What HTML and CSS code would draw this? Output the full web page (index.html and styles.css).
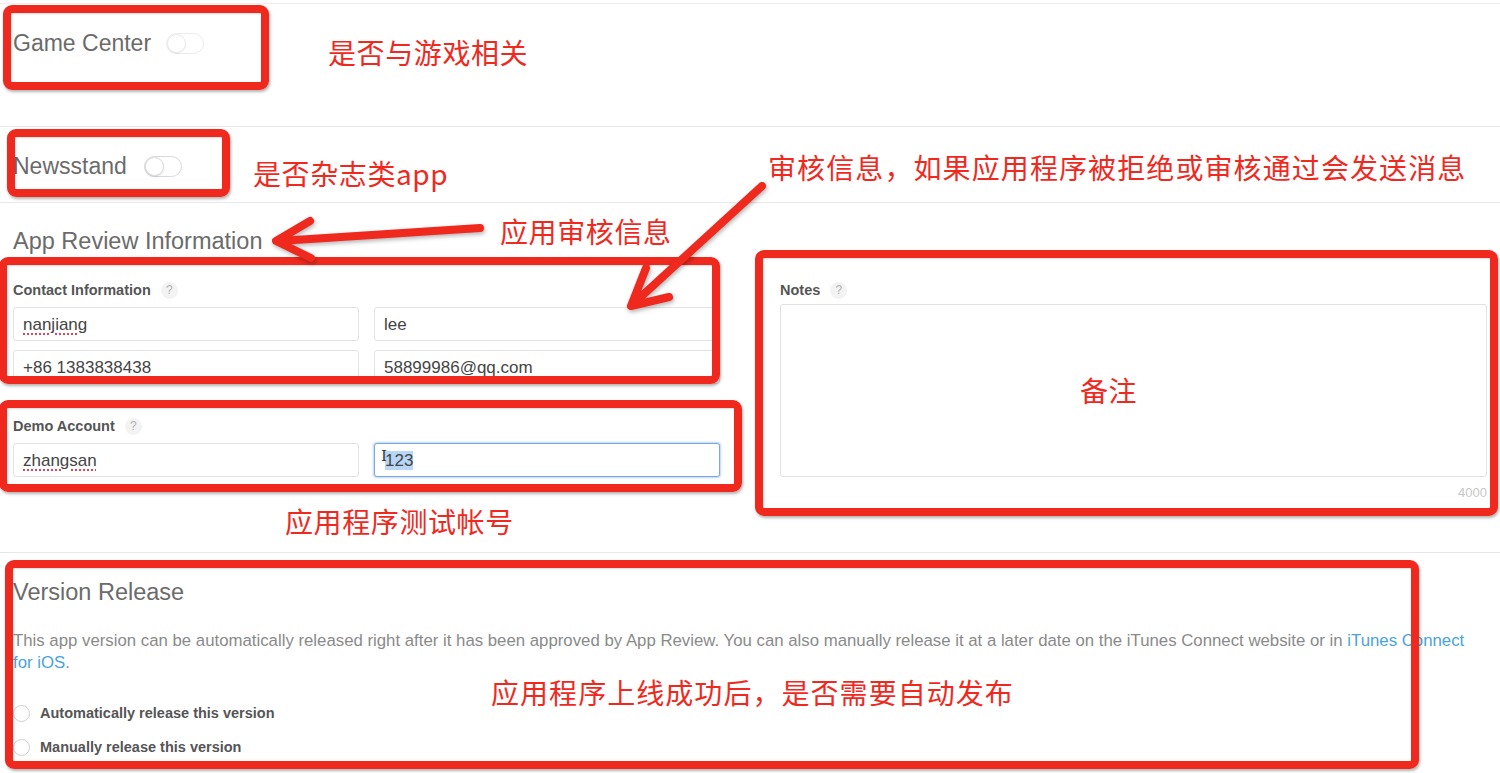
FILE: index.html
```html
<!DOCTYPE html>
<html lang="zh">
<head>
<meta charset="utf-8">
<title>App Review Information</title>
<link rel="stylesheet" href="styles.css">
</head>
<body>
<div class="page">
  <section class="row row-gc">
    <span class="row-title">Game Center</span>
    <span class="toggle toggle-faint"><span class="knob"></span></span>
  </section>
  <section class="row row-ns">
    <span class="row-title">Newsstand</span>
    <span class="toggle"><span class="knob"></span></span>
  </section>

  <section class="review">
    <h2 class="sec-title">App Review Information</h2>
    <div class="review-grid">
      <div class="col">
        <div class="field-label">Contact Information <span class="help">?</span></div>
        <div class="inputs">
          <div class="input"><span class="spell">nanjiang</span></div>
          <div class="input">lee</div>
          <div class="input">+86 1383838438</div>
          <div class="input">58899986@qq.com</div>
        </div>
        <div class="field-label demo-label">Demo Account <span class="help">?</span></div>
        <div class="inputs">
          <div class="input"><span class="spell">zhangsan</span></div>
          <div class="input focused"><span class="ibeam">I</span><span class="sel">123</span></div>
        </div>
      </div>
      <div class="col">
        <div class="field-label notes-label">Notes <span class="help">?</span></div>
        <div class="textarea"></div>
        <div class="count">4000</div>
      </div>
    </div>
  </section>

  <section class="release">
    <h2 class="sec-title">Version Release</h2>
    <p class="desc">This app version can be automatically released right after it has been approved by App Review. You can also manually release it at a later date on the iTunes Connect website or in <a class="link">iTunes Connect for iOS</a>.</p>
    <div class="radios">
      <label class="radio"><span class="radio-dot"></span>Automatically release this version</label>
      <label class="radio"><span class="radio-dot"></span>Manually release this version</label>
    </div>
  </section>

  <div class="annot">
    <div class="box box-gc"></div>
    <div class="box box-ns"></div>
    <div class="box box-contact"></div>
    <div class="box box-demo"></div>
    <div class="box box-notes"></div>
    <div class="box box-release"></div>
    <svg class="arrows" width="1500" height="773" viewBox="0 0 1500 773">
      <path d="M480 228 L279 241 M310 221 L276 241 L311 258"/>
      <path d="M762 186 L633 304 M646 268 L631 306 L669 297"/>
    </svg>
    <span class="note note-gc">是否与游戏相关</span>
    <span class="note note-ns">是否杂志类app</span>
    <span class="note note-msg">审核信息，如果应用程序被拒绝或审核通过会发送消息</span>
    <span class="note note-review">应用审核信息</span>
    <span class="note note-notes">备注</span>
    <span class="note note-demo">应用程序测试帐号</span>
    <span class="note note-release">应用程序上线成功后，是否需要自动发布</span>
  </div>
</div>
</body>
</html>
```

FILE: styles.css
```css
* { box-sizing: border-box; }
html, body { margin: 0; padding: 0; background: #fff; }
body {
  font-family: "Liberation Sans", Arial, sans-serif;
  color: #666;
  width: 1500px;
  height: 773px;
  overflow: hidden;
}
.page {
  position: relative;
  width: 1500px;
  height: 773px;
  padding-top: 3px;
}

/* toggle rows */
.row {
  display: flex;
  align-items: flex-start;
  padding: 26px 13px 0;
  border-bottom: 1px solid #e8e8e8;
}
.row-gc { height: 124px; border-top: 1px solid #ececec; }
.row-ns { height: 76px; }
.row-title {
  font-size: 23px;
  line-height: 26px;
  color: #6b6b6b;
}
.toggle {
  position: relative;
  display: inline-block;
  width: 38px;
  height: 21px;
  margin: 3px 0 0 15px;
  border: 1px solid #d9d9d9;
  border-radius: 11px;
  background: #fff;
}
.row-ns .toggle { margin-left: 17px; }
.toggle-faint { border-color: #ececec; }
.knob {
  position: absolute;
  left: 0;
  top: 0;
  width: 19px;
  height: 19px;
  border-radius: 50%;
  background: #fff;
  border: 1px solid #dcdcdc;
  box-shadow: 0 1px 2px rgba(0,0,0,0.12);
}
.toggle-faint .knob { border-color: #eaeaea; box-shadow: 0 1px 1px rgba(0,0,0,0.05); }

/* review */
.review {
  height: 350px;
  padding: 25px 13px 0;
  border-bottom: 1px solid #e8e8e8;
}
.sec-title {
  margin: 0;
  font-size: 23.5px;
  line-height: 26px;
  font-weight: normal;
  color: #6b6b6b;
}
.review-grid {
  display: grid;
  grid-template-columns: 707px 707px;
  column-gap: 60px;
  margin-top: 27px;
}
.field-label {
  display: flex;
  align-items: center;
  height: 18px;
  font-size: 14.5px;
  font-weight: bold;
  color: #555;
  margin-bottom: 8px;
}
.notes-label { margin-bottom: 5px; }
.demo-label { margin-top: 33px; }
.help {
  display: inline-flex;
  align-items: center;
  justify-content: center;
  width: 17px;
  height: 17px;
  margin-left: 10px;
  border-radius: 50%;
  background: #f3f3f3;
  color: #b0b0b0;
  font-size: 12px;
  font-weight: normal;
}
.inputs {
  display: grid;
  grid-template-columns: 346px 346px;
  column-gap: 15px;
  row-gap: 9px;
}
.input {
  position: relative;
  height: 34px;
  border: 1px solid #e2e2e2;
  border-radius: 3px;
  padding: 0 9px;
  font-size: 17px;
  line-height: 33px;
  color: #444;
  background: #fff;
}
.spell {
  text-decoration: underline dotted #e0445a;
  text-underline-offset: 3px;
  text-decoration-thickness: 2px;
}
.focused {
  border-color: #7aaadb;
  box-shadow: 0 0 2px 1px rgba(110,160,220,0.45);
  padding-left: 10px;
}
.sel { background: #b8d6f6; }
.ibeam {
  position: absolute;
  left: 6px;
  top: -4px;
  font-family: "DejaVu Serif", serif;
  font-size: 15px;
  color: #333;
}
.textarea {
  height: 173px;
  border: 1px solid #e2e2e2;
  border-radius: 3px;
}
.count {
  text-align: right;
  font-size: 13px;
  color: #c8c8c8;
  margin-top: 8px;
}

/* release */
.release {
  padding: 26px 13px 0;
}
.desc {
  margin: 25px 0 0;
  font-size: 16.8px;
  line-height: 22px;
  color: #8a8a8a;
  width: 1474px;
}
.link { color: #4aa3da; }
.radios {
  display: flex;
  flex-direction: column;
  gap: 14px;
  margin-top: 29px;
}
.radio {
  display: flex;
  align-items: center;
  height: 20px;
  font-size: 14.5px;
  font-weight: bold;
  color: #555;
}
.radio-dot {
  width: 17px;
  height: 17px;
  border-radius: 50%;
  border: 1px solid #cfcfcf;
  margin-right: 10px;
}

/* annotation layer */
.annot {
  position: absolute;
  left: 0;
  top: 0;
  width: 1500px;
  height: 773px;
  pointer-events: none;
}
.box {
  position: absolute;
  border: 8px solid #f0291e;
  border-radius: 9px;
  box-shadow: 1px 2px 3px rgba(0,0,0,0.3), inset 1px 1px 2px rgba(0,0,0,0.15);
}
.box-gc { left: 3px; top: 5px; width: 266px; height: 85px; }
.box-ns { left: 7px; top: 129px; width: 223px; height: 68px; }
.box-contact { left: -1px; top: 257px; width: 721px; height: 127px; }
.box-demo { left: -1px; top: 400px; width: 743px; height: 92px; }
.box-notes { left: 755px; top: 250px; width: 743px; height: 266px; }
.box-release { left: 5px; top: 560px; width: 1414px; height: 209px; }
.arrows {
  position: absolute;
  left: 0;
  top: 0;
  filter: drop-shadow(1px 2px 2px rgba(0,0,0,0.3));
}
.arrows path {
  fill: none;
  stroke: #f0291e;
  stroke-width: 8;
  stroke-linecap: round;
  stroke-linejoin: round;
}
.note {
  position: absolute;
  font-family: "Noto Sans CJK SC", "Noto Sans", sans-serif;
  font-size: 28px;
  line-height: 28px;
  letter-spacing: 0.6px;
  color: #f0291e;
  white-space: nowrap;
}
.note-gc { left: 328px; top: 38px; }
.note-ns { left: 253px; top: 159px; }
.note-msg { left: 768px; top: 153px; letter-spacing: 1.1px; }
.note-review { left: 500px; top: 217px; }
.note-notes { left: 1080px; top: 376px; }
.note-demo { left: 285px; top: 507px; }
.note-release { left: 491px; top: 678px; letter-spacing: 1.05px; }
```
